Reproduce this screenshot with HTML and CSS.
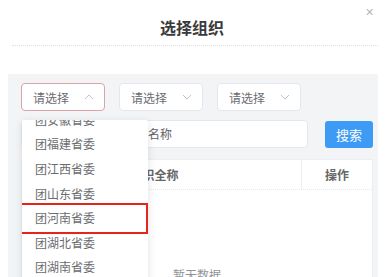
FILE: index.html
```html
<!DOCTYPE html>
<html lang="zh-CN">
<head>
    <meta charset="UTF-8">
    <title>选择组织</title>
    <link rel="stylesheet" href="styles.css">
</head>
<body>
    <div class="dialog">
        <div class="dialog-header">
            <span class="dialog-title">选择组织</span>
            <span class="dialog-close">✕</span>
        </div>
        <div class="panel">
            <div class="select-row">
                <div class="select is-focus">
                    <span>请选择</span>
                    <svg class="arrow" width="10" height="6" viewBox="0 0 10 6"><path d="M1 5 L5 1 L9 5" fill="none" stroke="#c0c4cc" stroke-width="1"/></svg>
                </div>
                <div class="select">
                    <span>请选择</span>
                    <svg class="arrow" width="10" height="6" viewBox="0 0 10 6"><path d="M1 1 L5 5 L9 1" fill="none" stroke="#c0c4cc" stroke-width="1"/></svg>
                </div>
                <div class="select">
                    <span>请选择</span>
                    <svg class="arrow" width="10" height="6" viewBox="0 0 10 6"><path d="M1 1 L5 5 L9 1" fill="none" stroke="#c0c4cc" stroke-width="1"/></svg>
                </div>
            </div>
            <div class="search-row">
                <div class="name-input">请输入组织名称</div>
                <button class="search-btn">搜索</button>
            </div>
            <div class="table">
                <div class="table-head">
                    <div class="col-name">组织全称</div>
                    <div class="col-op">操作</div>
                </div>
                <div class="table-body">
                    <span class="empty">暂无数据</span>
                </div>
            </div>

            <div class="dropdown">
                <div class="dropdown-list">
                    <div class="option">团安徽省委</div>
                    <div class="option">团福建省委</div>
                    <div class="option">团江西省委</div>
                    <div class="option">团山东省委</div>
                    <div class="option marked">团河南省委</div>
                    <div class="option">团湖北省委</div>
                    <div class="option">团湖南省委</div>
                </div>
            </div>
        </div>
    </div>
</body>
</html>
```

FILE: styles.css
```css
body {
    margin: 0;
    background-color: #fff;
    font-family: "Noto Sans CJK SC", "Noto Sans", sans-serif;
    overflow: hidden;
}
.dialog {
    width: 389px;
    height: 277px;
    overflow: hidden;
}
.dialog-header {
    position: relative;
    height: 45px;
    margin: 0 11px 0 12px;
    border-bottom: 1px dotted #dcdfe6;
    display: flex;
    justify-content: center;
    align-items: center;
}
.dialog-title {
    font-size: 16px;
    font-weight: bold;
    color: #3a3a3a;
    margin-top: 9px;
    margin-left: -6px;
}
.dialog-close {
    position: absolute;
    top: 3px;
    right: 4px;
    font-size: 11px;
    color: #b4b8be;
}
.panel {
    position: relative;
    margin: 28px 11px 0 8px;
    padding: 9px 5px 0 13px;
    background-color: #f3f4f6;
    height: 220px;
}
.select-row {
    display: flex;
    gap: 14px;
}
.select {
    width: 84px;
    height: 28px;
    box-sizing: border-box;
    border: 1px solid #e4e7ed;
    border-radius: 4px;
    background-color: #fff;
    display: flex;
    align-items: center;
    justify-content: space-between;
    padding: 0 10px 0 11px;
    font-size: 12px;
    color: #6a6c70;
}
.select.is-focus {
    border-color: #dba3a6;
}
.search-row {
    display: flex;
    align-items: center;
    gap: 17px;
    margin-top: 9px;
}
.name-input {
    width: 288px;
    height: 28px;
    box-sizing: border-box;
    border: 1px solid #e4e7ed;
    border-radius: 4px;
    background-color: #fff;
    padding-left: 66px;
    font-size: 12px;
    line-height: 26px;
    color: #606266;
}
.search-btn {
    width: 48px;
    height: 27px;
    border: none;
    border-radius: 3px;
    background-color: #3d9bf6;
    color: #fff;
    font-family: inherit;
    font-size: 13px;
    padding: 0;
}
.table {
    margin-top: 11px;
    width: 352px;
    background-color: #fff;
    border: 1px solid #ebeef5;
    box-sizing: border-box;
}
.table-head {
    display: flex;
    height: 29px;
    border-bottom: 1px dotted #e4e7ed;
    font-size: 12px;
    font-weight: bold;
    color: #666;
}
.col-name {
    flex: 1;
    display: flex;
    align-items: center;
    justify-content: center;
    padding-right: 14px;
}
.col-op {
    width: 70px;
    border-left: 1px solid #ebeef5;
    display: flex;
    align-items: center;
    justify-content: center;
}
.table-body {
    height: 120px;
    display: flex;
    justify-content: center;
    padding-top: 76px;
    box-sizing: border-box;
}
.empty {
    font-size: 12px;
    color: #909399;
}
.dropdown {
    position: absolute;
    top: 46px;
    left: 14px;
    width: 126px;
    height: 200px;
    background-color: #fff;
    box-shadow: 0 2px 8px rgba(0, 0, 0, 0.12);
    border-radius: 2px;
}
.dropdown-list {
    overflow: hidden;
    height: 100%;
}
.option {
    height: 24.6px;
    display: flex;
    align-items: center;
    padding-left: 13px;
    font-size: 12px;
    color: #6a6c70;
}
.option:first-child {
    margin-top: -13px;
}
.dropdown .marked {
    position: relative;
}
.marked::after {
    content: "";
    position: absolute;
    left: -2px;
    right: 0;
    top: -2px;
    bottom: -4px;
    border: 2.5px solid #e8231a;
}
```
